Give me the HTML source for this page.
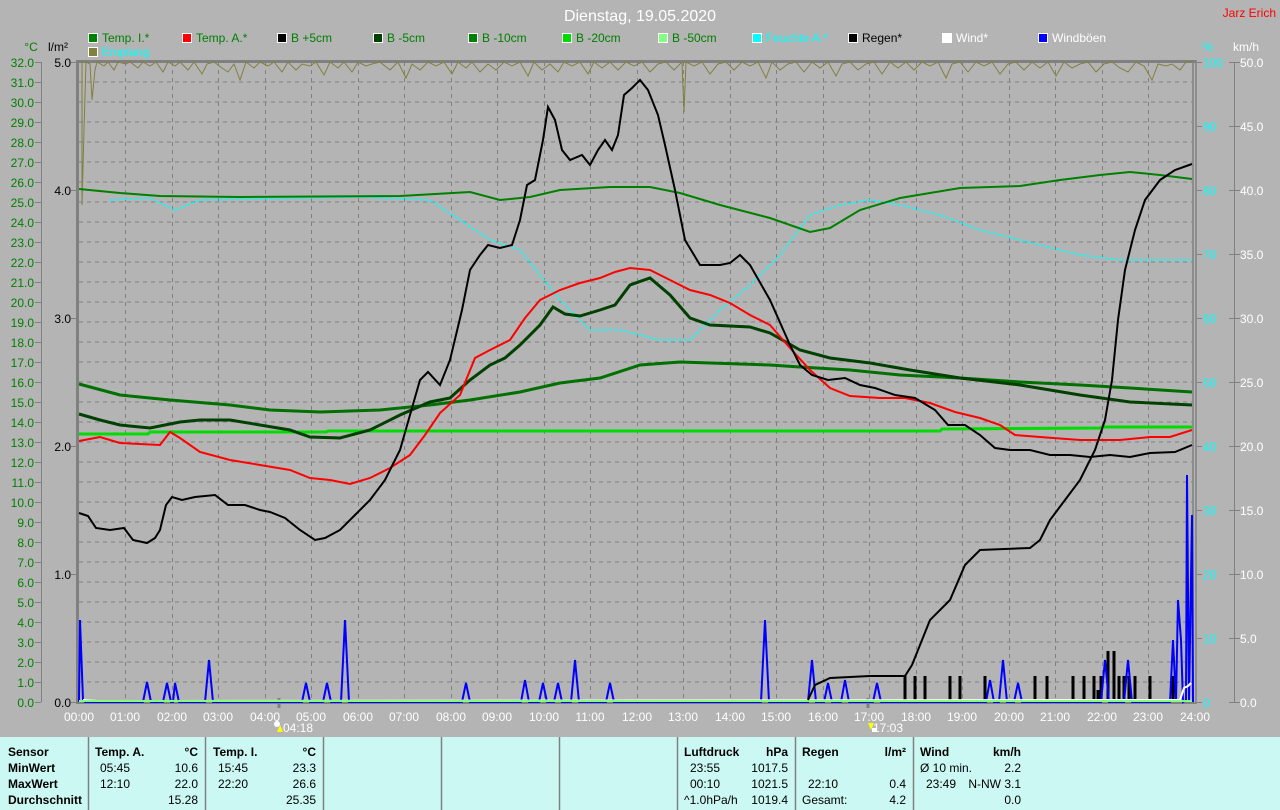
<!DOCTYPE html>
<html><head><meta charset="utf-8"><style>
html,body{margin:0;padding:0;background:#b4b4b4;width:1280px;height:810px;overflow:hidden}
svg{display:block;font-family:"Liberation Sans",sans-serif}
</style></head><body>
<svg width="1280" height="810" viewBox="0 0 1280 810" xmlns="http://www.w3.org/2000/svg">
<rect width="1280" height="810" fill="#b4b4b4"/>
<text x="640" y="21" font-size="16" fill="#fff" text-anchor="middle">Dienstag, 19.05.2020</text>
<text x="1276" y="17" font-size="12" fill="#f00" text-anchor="end">Jarz Erich</text>
<g font-size="12">
<rect x="88.5" y="33.5" width="9" height="9" fill="#008000" stroke="#fff"/><text x="102" y="42" fill="#008000">Temp. I.*</text>
<rect x="182.5" y="33.5" width="9" height="9" fill="#f00" stroke="#fff"/><text x="196" y="42" fill="#008000">Temp. A.*</text>
<rect x="277.5" y="33.5" width="9" height="9" fill="#000" stroke="#fff"/><text x="291" y="42" fill="#008000">B +5cm</text>
<rect x="373.5" y="33.5" width="9" height="9" fill="#004000" stroke="#fff"/><text x="387" y="42" fill="#008000">B -5cm</text>
<rect x="468.5" y="33.5" width="9" height="9" fill="#008000" stroke="#fff"/><text x="482" y="42" fill="#008000">B -10cm</text>
<rect x="562.5" y="33.5" width="9" height="9" fill="#00dc00" stroke="#fff"/><text x="576" y="42" fill="#008000">B -20cm</text>
<rect x="658.5" y="33.5" width="9" height="9" fill="#80ff80" stroke="#fff"/><text x="672" y="42" fill="#008000">B -50cm</text>
<rect x="752.5" y="33.5" width="9" height="9" fill="#0ff" stroke="#fff"/><text x="766" y="42" fill="#0ff">Feuchte A.*</text>
<rect x="848.5" y="33.5" width="9" height="9" fill="#000" stroke="#fff"/><text x="862" y="42" fill="#000">Regen*</text>
<rect x="942.5" y="33.5" width="9" height="9" fill="#fff" stroke="#fff"/><text x="956" y="42" fill="#fff">Wind*</text>
<rect x="1038.5" y="33.5" width="9" height="9" fill="#00f" stroke="#fff"/><text x="1052" y="42" fill="#fff">Windböen</text>
<rect x="88.5" y="47.5" width="9" height="9" fill="#808040" stroke="#fff"/><text x="102" y="56" fill="#0ff">Emplang</text>
<text x="31" y="51" fill="#008000" text-anchor="middle">°C</text>
<text x="58" y="51" fill="#000" text-anchor="middle">l/m²</text>
<text x="1208" y="51" fill="#0ff" text-anchor="middle">%</text>
<text x="1246" y="51" fill="#fff" text-anchor="middle">km/h</text>
</g>
<!-- grid -->
<g stroke="#808080" stroke-dasharray="4,4" stroke-width="1">
<path d="M79 82H1192M79 102H1192M79 122H1192M79 142H1192M79 162H1192M79 182H1192M79 202H1192M79 222H1192M79 242H1192M79 262H1192M79 282H1192M79 302H1192M79 322H1192M79 342H1192M79 362H1192M79 382H1192M79 402H1192M79 422H1192M79 442H1192M79 462H1192M79 482H1192M79 502H1192M79 522H1192M79 542H1192M79 562H1192M79 582H1192M79 602H1192M79 622H1192M79 642H1192M79 662H1192M79 682H1192"/>
<path d="M125.5 62V702M172.5 62V702M218.5 62V702M265.5 62V702M311.5 62V702M358.5 62V702M404.5 62V702M451.5 62V702M497.5 62V702M544.5 62V702M590.5 62V702M637.5 62V702M683.5 62V702M730.5 62V702M776.5 62V702M823.5 62V702M869.5 62V702M916.5 62V702M962.5 62V702M1009.5 62V702M1055.5 62V702M1102.5 62V702M1148.5 62V702"/>
</g>
<!-- axes -->
<g stroke="#808080" fill="none">
<path d="M41.5 62V702" />
<path d="M77.5 60V704" stroke-width="3"/>
<path d="M77 61.5H1196" stroke-width="3"/>
<path d="M1193 60V704M1196 60V704" stroke-width="1.5"/>
<path d="M1234.5 62V702"/>
<path d="M77 703H1196" stroke-width="2"/>
<path d="M279 698V708M868 698V708" stroke-width="3"/>
</g>
<g stroke="#808080">
<path d="M35 62.5H41M35 82.5H41M35 102.5H41M35 122.5H41M35 142.5H41M35 162.5H41M35 182.5H41M35 202.5H41M35 222.5H41M35 242.5H41M35 262.5H41M35 282.5H41M35 302.5H41M35 322.5H41M35 342.5H41M35 362.5H41M35 382.5H41M35 402.5H41M35 422.5H41M35 442.5H41M35 462.5H41M35 482.5H41M35 502.5H41M35 522.5H41M35 542.5H41M35 562.5H41M35 582.5H41M35 602.5H41M35 622.5H41M35 642.5H41M35 662.5H41M35 682.5H41M35 702.5H41"/>
<path d="M71 62.5H77M71 190.5H77M71 318.5H77M71 446.5H77M71 574.5H77M71 702.5H77"/>
<path d="M1197 62.5H1202M1197 126.5H1202M1197 190.5H1202M1197 254.5H1202M1197 318.5H1202M1197 382.5H1202M1197 446.5H1202M1197 510.5H1202M1197 574.5H1202M1197 638.5H1202M1197 702.5H1202"/>
<path d="M1229 62.5H1240M1229 126.5H1240M1229 190.5H1240M1229 254.5H1240M1229 318.5H1240M1229 382.5H1240M1229 446.5H1240M1229 510.5H1240M1229 574.5H1240M1229 638.5H1240M1229 702.5H1240"/>
</g>
<g font-size="12" fill="#008000" text-anchor="end">
<text x="34" y="67">32.0</text><text x="34" y="87">31.0</text><text x="34" y="107">30.0</text><text x="34" y="127">29.0</text><text x="34" y="147">28.0</text><text x="34" y="167">27.0</text><text x="34" y="187">26.0</text><text x="34" y="207">25.0</text><text x="34" y="227">24.0</text><text x="34" y="247">23.0</text><text x="34" y="267">22.0</text><text x="34" y="287">21.0</text><text x="34" y="307">20.0</text><text x="34" y="327">19.0</text><text x="34" y="347">18.0</text><text x="34" y="367">17.0</text><text x="34" y="387">16.0</text><text x="34" y="407">15.0</text><text x="34" y="427">14.0</text><text x="34" y="447">13.0</text><text x="34" y="467">12.0</text><text x="34" y="487">11.0</text><text x="34" y="507">10.0</text><text x="34" y="527">9.0</text><text x="34" y="547">8.0</text><text x="34" y="567">7.0</text><text x="34" y="587">6.0</text><text x="34" y="607">5.0</text><text x="34" y="627">4.0</text><text x="34" y="647">3.0</text><text x="34" y="667">2.0</text><text x="34" y="687">1.0</text><text x="34" y="707">0.0</text>
</g>
<g font-size="12" fill="#000" text-anchor="end">
<text x="71" y="67">5.0</text><text x="71" y="195">4.0</text><text x="71" y="323">3.0</text><text x="71" y="451">2.0</text><text x="71" y="579">1.0</text><text x="71" y="707">0.0</text>
</g>
<g font-size="12" fill="#0ff">
<text x="1203" y="67">100</text><text x="1203" y="131">90</text><text x="1203" y="195">80</text><text x="1203" y="259">70</text><text x="1203" y="323">60</text><text x="1203" y="387">50</text><text x="1203" y="451">40</text><text x="1203" y="515">30</text><text x="1203" y="579">20</text><text x="1203" y="643">10</text><text x="1203" y="707">0</text>
</g>
<g font-size="12" fill="#fff">
<text x="1240" y="67">50.0</text><text x="1240" y="131">45.0</text><text x="1240" y="195">40.0</text><text x="1240" y="259">35.0</text><text x="1240" y="323">30.0</text><text x="1240" y="387">25.0</text><text x="1240" y="451">20.0</text><text x="1240" y="515">15.0</text><text x="1240" y="579">10.0</text><text x="1240" y="643">5.0</text><text x="1240" y="707">0.0</text>
</g>
<g font-size="12" fill="#fff" text-anchor="middle">
<text x="79" y="721">00:00</text><text x="125" y="721">01:00</text><text x="172" y="721">02:00</text><text x="218" y="721">03:00</text><text x="265" y="721">04:00</text><text x="311" y="721">05:00</text><text x="358" y="721">06:00</text><text x="404" y="721">07:00</text><text x="451" y="721">08:00</text><text x="497" y="721">09:00</text><text x="544" y="721">10:00</text><text x="590" y="721">11:00</text><text x="637" y="721">12:00</text><text x="683" y="721">13:00</text><text x="730" y="721">14:00</text><text x="776" y="721">15:00</text><text x="823" y="721">16:00</text><text x="869" y="721">17:00</text><text x="916" y="721">18:00</text><text x="962" y="721">19:00</text><text x="1009" y="721">20:00</text><text x="1055" y="721">21:00</text><text x="1102" y="721">22:00</text><text x="1148" y="721">23:00</text><text x="1195" y="721">24:00</text>
<text x="298" y="732">04:18</text><text x="888" y="732">17:03</text>
</g>
<circle cx="277" cy="724" r="3" fill="#fff"/><path d="M277 732l3-7 3 7z" fill="#ff0"/>
<path d="M868 723l3 7 3-7z" fill="#ff0"/><rect x="872" y="728" width="5" height="4" fill="#fff"/>

<!-- rain bars -->
<g stroke="#000" stroke-width="3">
<path d="M905 702V676M915 702V676M925 702V676M950 702V676M960 702V676M985 702V676M1035 702V676M1047 702V676M1073 702V676M1084 702V676M1094 702V676M1101 702V676M1108 702V651M1114 702V651M1119 702V676M1124 702V676M1129 702V676M1135 702V676M1150 702V676M1173 702V676M1098 702V690"/>
</g>
<!-- gusts -->
<polyline fill="none" stroke="#00f" stroke-width="2" points="79,702 80,620 83,700 85,702 143,702 147,682 151,702 163,702 167,683 171,702 173,702 175,683 179,702 205,702 209,660 213,702 302,702 306,683 310,702 323,702 327,683 331,702 341,702 345,620 349,702 462,702 466,683 470,702 521,702 525,680 529,702 539,702 543,683 547,702 554,702 558,683 562,702 571,702 575,660 579,702 606,702 610,683 614,702 761,702 765,620 769,702 808,702 812,660 816,702 824,702 828,683 832,702 841,702 845,680 849,702 873,702 877,683 881,702 986,702 990,680 994,702 999,702 1003,660 1007,702 1014,702 1018,683 1022,702 1101,702 1105,660 1109,702 1124,702 1128,660 1132,702 1170,702 1173,640 1176,702 1178,600 1181,640 1183,702 1186,700 1187,475 1189,702 1190,640 1192,515 1193,702"/>
<polyline fill="none" stroke="#fff" stroke-width="2" points="83,700 98,701 1180,700 1184,688 1188,686 1191,683"/>
<!-- B -50 -->
<path d="M79 701H1192" stroke="#80ff80" stroke-width="2"/>
<!-- emplang olive -->
<polyline fill="none" stroke="#808040" stroke-width="1" points="79,62 82,62 82,205 84,130 86,62 90,64 92,100 95,70 97,62 104,66 108,62 114,70 118,62 126,64 130,62 138,68 143,62 150,66 156,62 163,72 168,62 175,66 180,62 188,70 194,62 202,74 207,64 214,62 222,68 228,72 234,64 240,80 246,62 254,68 260,62 268,66 274,62 282,72 288,62 296,70 302,64 310,66 316,62 324,75 330,62 338,68 344,62 352,72 358,62 366,66 372,64 380,62 390,70 398,62 406,78 412,64 420,70 428,62 436,66 444,62 452,74 458,62 466,68 472,62 480,72 488,64 496,70 504,62 512,66 520,62 528,76 534,62 542,70 550,64 558,72 564,62 572,66 580,62 588,74 594,62 602,68 610,62 618,70 626,62 634,66 642,62 650,72 658,64 666,62 674,70 682,62 684,112 686,62 694,66 702,62 710,74 718,64 726,62 734,70 742,62 750,66 758,62 766,78 772,62 780,70 788,64 796,62 804,72 812,62 820,68 828,62 836,76 842,64 850,62 858,70 866,64 874,62 882,74 890,62 898,68 906,62 914,70 922,62 930,66 938,62 946,78 952,64 960,62 968,72 976,62 984,66 992,62 1000,74 1008,64 1016,62 1024,70 1032,62 1040,68 1048,62 1056,76 1064,62 1072,68 1080,64 1088,62 1096,72 1104,64 1112,62 1120,68 1128,72 1136,62 1144,66 1152,80 1158,64 1166,66 1172,64 1180,70 1186,62 1192,62"/>
<!-- humidity cyan -->
<polyline fill="none" stroke="#0ff" stroke-width="1.5" stroke-dasharray="3,2" points="110,200 150,198 175,210 200,200 360,197 430,200 460,220 490,240 520,250 540,275 560,300 590,330 620,330 660,340 690,340 720,310 750,285 780,255 810,215 840,205 870,200 900,205 940,215 980,230 1040,245 1080,255 1120,260 1192,260"/>
<!-- Temp I -->
<polyline fill="none" stroke="#008000" stroke-width="2" points="79,189 120,193 160,196 240,197 400,196 470,192 500,200 530,197 560,190 610,187 650,187 680,193 720,205 770,218 810,232 830,228 860,210 900,198 960,188 1020,186 1060,180 1100,175 1130,172 1160,175 1192,179"/>
<!-- B -20 -->
<polyline fill="none" stroke="#00dc00" stroke-width="3" points="79,434 148,434 150,432 326,432 328,431 940,431 942,429 1100,428 1102,427 1192,427"/>
<!-- B -10 -->
<polyline fill="none" stroke="#007000" stroke-width="3" points="79,384 120,395 170,400 230,405 270,410 320,412 380,410 430,405 470,400 520,392 560,383 600,378 640,365 680,362 770,365 800,367 850,370 900,375 960,378 1020,382 1080,385 1130,388 1192,392"/>
<!-- B -5 -->
<polyline fill="none" stroke="#004000" stroke-width="3" points="79,414 100,420 120,425 150,428 180,422 200,420 230,420 260,425 290,430 310,437 340,438 370,430 400,415 430,402 450,398 470,380 490,365 505,358 520,345 540,325 553,307 565,314 580,316 600,310 615,305 630,285 650,278 670,295 690,318 710,325 750,327 770,333 800,350 830,358 870,363 910,370 960,378 1020,385 1080,395 1130,402 1192,405"/>
<!-- Temp A -->
<polyline fill="none" stroke="#f00" stroke-width="2" points="79,441 100,437 120,443 160,445 170,432 180,438 200,452 230,460 260,465 290,470 310,478 330,480 350,484 370,478 390,468 410,455 425,435 440,413 460,395 475,358 490,350 510,340 525,318 540,300 560,290 580,283 600,278 615,272 630,268 650,270 670,280 690,290 710,295 730,303 750,315 770,325 790,348 810,370 830,388 850,396 880,398 905,398 930,403 955,412 980,418 1000,425 1015,435 1040,437 1080,440 1120,440 1150,437 1170,437 1192,430"/>
<!-- B +5 -->
<polyline fill="none" stroke="#000" stroke-width="2" points="79,513 88,516 96,528 110,530 124,528 133,540 147,543 155,538 160,530 166,505 172,497 182,500 195,497 215,495 228,505 245,505 260,510 270,512 285,518 300,530 315,540 325,538 340,530 355,515 370,500 385,480 400,450 410,415 420,380 428,372 440,385 450,360 462,310 470,270 480,255 488,245 500,248 512,245 520,220 527,185 535,180 543,140 548,107 555,120 562,150 570,160 582,155 590,165 598,150 605,140 612,150 618,135 624,95 632,88 640,80 648,90 658,115 665,145 675,190 685,240 700,265 720,265 730,263 740,255 750,265 770,300 790,345 800,365 812,375 828,380 845,378 860,385 875,388 895,395 915,398 935,410 948,425 965,425 980,435 995,448 1010,450 1030,450 1050,455 1070,455 1090,457 1110,455 1130,457 1150,453 1175,452 1192,445"/>
<!-- rain cumulative -->
<polyline fill="none" stroke="#000" stroke-width="2" points="808,700 815,685 830,678 870,676 905,676 912,665 930,620 950,600 965,565 980,550 1030,548 1040,540 1050,520 1065,500 1080,480 1095,450 1105,420 1112,380 1118,320 1125,270 1135,230 1145,200 1160,180 1175,170 1192,164"/>

<!-- table -->
<rect x="0" y="737" width="1280" height="73" fill="#ccf8f4"/>
<g stroke="#808080" stroke-width="1.5">
<path d="M88.5 737V810M205.5 737V810M323.5 737V810M441.5 737V810M559.5 737V810M677.5 737V810M795.5 737V810M913.5 737V810"/>
</g>
<g font-size="12" fill="#000">
<g font-weight="bold">
<text x="8" y="756">Sensor</text><text x="8" y="772">MinWert</text><text x="8" y="788">MaxWert</text><text x="8" y="804">Durchschnitt</text>
<text x="95" y="756">Temp. A.</text><text x="198" y="756" text-anchor="end">°C</text>
<text x="213" y="756">Temp. I.</text><text x="316" y="756" text-anchor="end">°C</text>
<text x="684" y="756">Luftdruck</text><text x="788" y="756" text-anchor="end">hPa</text>
<text x="802" y="756">Regen</text><text x="906" y="756" text-anchor="end">l/m²</text>
<text x="920" y="756">Wind</text><text x="1021" y="756" text-anchor="end">km/h</text>
</g>
<text x="100" y="772">05:45</text><text x="198" y="772" text-anchor="end">10.6</text>
<text x="100" y="788">12:10</text><text x="198" y="788" text-anchor="end">22.0</text>
<text x="198" y="804" text-anchor="end">15.28</text>
<text x="218" y="772">15:45</text><text x="316" y="772" text-anchor="end">23.3</text>
<text x="218" y="788">22:20</text><text x="316" y="788" text-anchor="end">26.6</text>
<text x="316" y="804" text-anchor="end">25.35</text>
<text x="690" y="772">23:55</text><text x="788" y="772" text-anchor="end">1017.5</text>
<text x="690" y="788">00:10</text><text x="788" y="788" text-anchor="end">1021.5</text>
<text x="684" y="804">^1.0hPa/h</text><text x="788" y="804" text-anchor="end">1019.4</text>
<text x="808" y="788">22:10</text><text x="906" y="788" text-anchor="end">0.4</text>
<text x="802" y="804">Gesamt:</text><text x="906" y="804" text-anchor="end">4.2</text>
<text x="920" y="772">Ø 10 min.</text><text x="1021" y="772" text-anchor="end">2.2</text>
<text x="926" y="788">23:49</text><text x="1021" y="788" text-anchor="end">N-NW 3.1</text>
<text x="1021" y="804" text-anchor="end">0.0</text>
</g>
</svg>
</body></html>
